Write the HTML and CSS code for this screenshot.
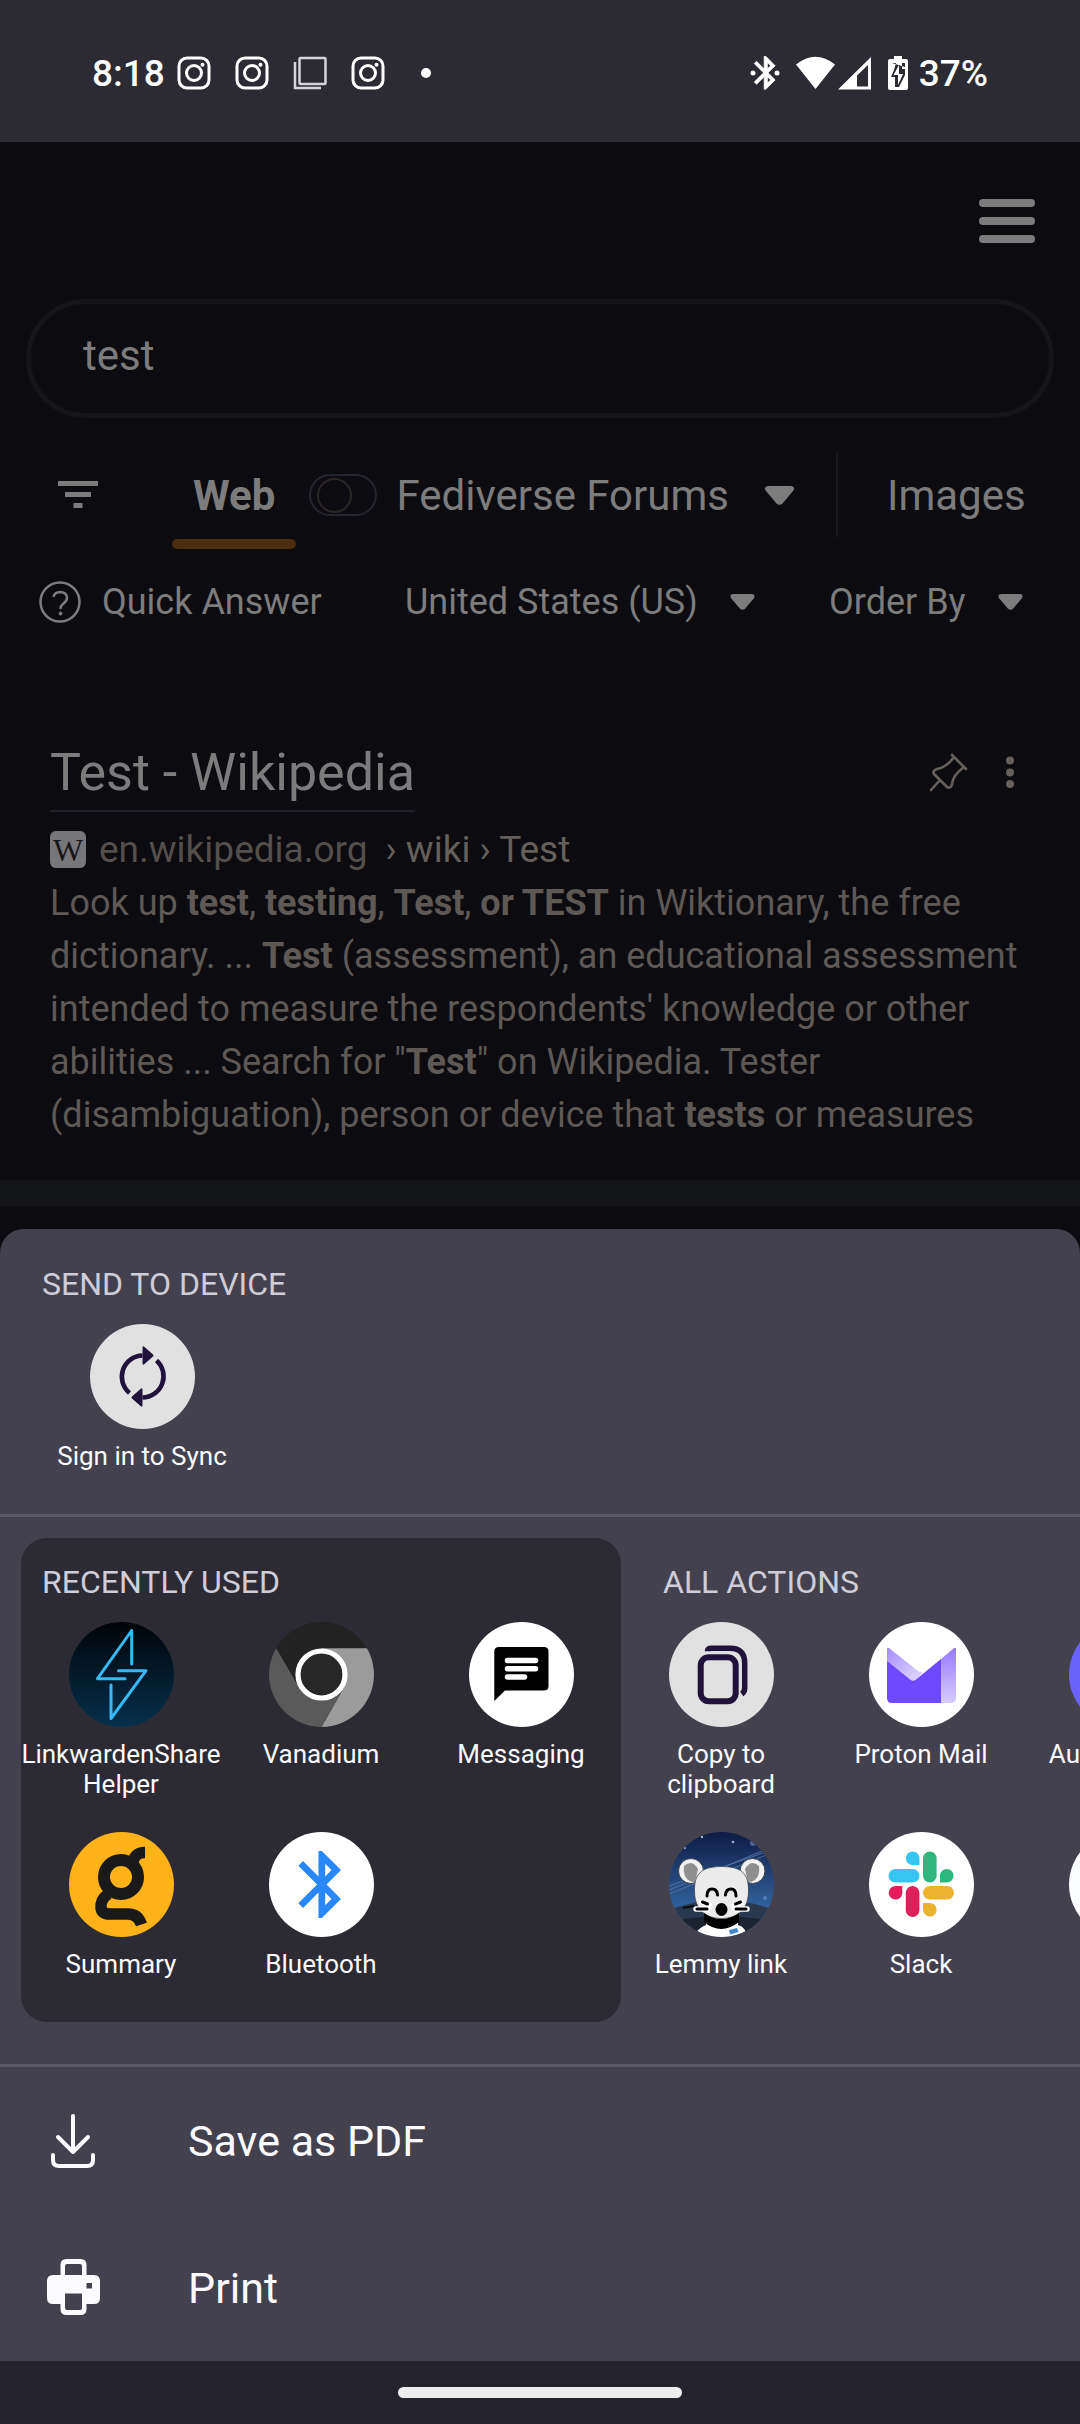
FILE: index.html
```html
<!DOCTYPE html>
<html lang="en">
<head>
<meta charset="utf-8">
<meta name="viewport" content="width=device-width, initial-scale=1">
<title>Share</title>
<link rel="stylesheet" href="styles.css">
</head>
<body>
<svg class="defs" aria-hidden="true">
  <defs>
    <symbol id="insta" viewBox="0 0 34 34">
      <rect x="2" y="2" width="30" height="30" rx="8" fill="none" stroke="currentColor" stroke-width="3"/>
      <circle cx="17" cy="17" r="7.500" fill="none" stroke="currentColor" stroke-width="3"/>
      <circle cx="25.500" cy="8.800" r="2" fill="currentColor"/>
    </symbol>
    <symbol id="caret" viewBox="0 0 29 19">
      <path d="M3 0h23q5 1 2 5L17.500 17.500q-3 2.500-6 0L1 5Q-2 1 3 0z" fill="currentColor"/>
    </symbol>
    <path id="bt" d="M17.710 7.710L12 2h-1v7.590L6.410 5 5 6.410 10.590 12 5 17.590 6.410 19 11 14.410V22h1l5.710-5.710-4.300-4.290 4.300-4.290zM13 5.830l1.880 1.880L13 9.590V5.830zm1.880 10.460L13 18.170v-3.760l1.880 1.880z"/>
    <linearGradient id="night" x1="0" y1="0" x2="0" y2="1"><stop offset="0" stop-color="#010408"/><stop offset="1" stop-color="#05304c"/></linearGradient>
    <linearGradient id="sky" x1="0" y1="0" x2="0" y2="1"><stop offset="0" stop-color="#0f1b45"/><stop offset=".7" stop-color="#30609a"/></linearGradient>
    <linearGradient id="flap" x1="0" y1="0" x2="1" y2="1"><stop offset="0" stop-color="#a48bff"/><stop offset="1" stop-color="#e6defe"/></linearGradient>
    <linearGradient id="side" x1="0" y1="0" x2="0" y2="1"><stop offset="0" stop-color="#957afb"/><stop offset="1" stop-color="#d8ccfe"/></linearGradient>
    <clipPath id="disc"><circle cx="52.500" cy="52.500" r="52.500"/></clipPath>
  </defs>
</svg>

<header class="status">
  <span class="clock">8:18</span>
  <svg class="note" width="34" height="34"><use href="#insta"/></svg>
  <svg class="note" width="34" height="34"><use href="#insta"/></svg>
  <svg class="note" width="34" height="34" viewBox="0 0 34 34" fill="none" stroke="#d5d4d8" stroke-width="2.500"><rect x="6.500" y="2" width="26" height="26" rx="1"/><path d="M2 6v26h26"/></svg>
  <svg class="note" width="34" height="34"><use href="#insta"/></svg>
  <i class="dot"></i>
  <span class="system">
    <svg width="30" height="34" viewBox="0 0 30 34" fill="currentColor"><use href="#bt" transform="translate(-4 -3) scale(1.650)" stroke="currentColor" stroke-width=".4"/><circle cx="3" cy="17" r="2.500"/><circle cx="27" cy="17" r="2.500"/></svg>
    <svg width="76" height="34" viewBox="0 0 76 34" fill="currentColor"><path d="M0 8.500Q19.500-7 39 8.500L19.500 33z"/><path d="M75 1v32.500H42zM72 9L61 19.500V30.500H72z" fill-rule="evenodd"/></svg>
    <svg width="20" height="36" viewBox="0 0 20 36"><path d="M6 1h8v3h4q2 0 2 2v27q0 2-2 2H2q-2 0-2-2V6q0-2 2-2h4z" fill="currentColor"/><path d="M4 8H8L6 15 3 22h4v10h4l6-12V14h-3V8h3v4" fill="#2c2a33"/><path d="M11 10L5.500 20H10v10l5-11h-4z" fill="currentColor"/></svg>
    <span class="battery">37%</span>
  </span>
</header>

<main>
  <div class="topbar">
    <button class="menu" aria-label="Menu"><i></i><i></i><i></i></button>
  </div>
  <form class="search"><input type="text" value="test" aria-label="Search"></form>

  <nav class="tabs">
    <button class="filter" aria-label="Filters"><svg width="40" height="28" viewBox="0 0 40 28" fill="currentColor"><path d="M0 0h40v5H0zM7 11h26v5H7zM15.500 22h9v5h-9z"/></svg></button>
    <a class="web" href="#">Web</a>
    <input class="toggle" id="lens" type="checkbox">
    <label class="lens" for="lens">Fediverse Forums</label>
    <button class="pick" aria-label="Choose lens"><svg width="29" height="19"><use href="#caret"/></svg></button>
    <i class="rule"></i>
    <a class="images" href="#">Images</a>
  </nav>

  <div class="filters">
    <button class="quick">
      <svg width="42" height="42" viewBox="0 0 42 42" fill="none" stroke="currentColor" stroke-width="2.500"><circle cx="21" cy="21" r="19.500"/><path d="M14.500 16q1-5 7-5 6.500.5 6.500 6 0 3-4 6-2.500 2-2.500 5"/><circle cx="21.500" cy="32.500" r="1.500" fill="currentColor" stroke-width="1"/></svg>
      Quick Answer
    </button>
    <span class="choice region"><select aria-label="Region"><option>United States (US)</option></select><svg width="25" height="16" viewBox="0 0 29 19"><use href="#caret"/></svg></span>
    <span class="choice"><select aria-label="Order"><option>Order By</option></select><svg width="25" height="16" viewBox="0 0 29 19"><use href="#caret"/></svg></span>
  </div>

  <article class="result">
    <div class="result-head">
      <h2><a href="#">Test - Wikipedia</a></h2>
      <button aria-label="Pin"><svg width="39" height="39" viewBox="0 0 39 39" fill="none" stroke="currentColor" stroke-width="2.600" stroke-linecap="round" stroke-linejoin="round"><path d="M23 2L37 16M25 4q-7 10-17 12-5 2-3 5L18 34q4 2 5-3 1-9 12-17M11 27L2 37"/></svg></button>
      <button aria-label="More options"><svg width="8" height="33" viewBox="0 0 8 33" fill="currentColor"><circle cx="4" cy="4.500" r="4"/><circle cx="4" cy="16.500" r="4"/><circle cx="4" cy="28" r="4"/></svg></button>
    </div>
    <p class="url"><span class="favicon">W</span><span class="domain">en.wikipedia.org</span><span>› wiki › Test</span></p>
    <p class="snippet">Look up <b>test</b>, <b>testing</b>, <b>Test</b>, <b>or TEST</b> in Wiktionary, the free dictionary. ... <b>Test</b> (assessment), an educational assessment intended to measure the respondents' knowledge or other abilities ... Search for "<b>Test</b>" on Wikipedia. Tester (disambiguation), person or device that <b>tests</b> or measures</p>
  </article>
</main>

<section class="sheet">
  <div class="devices">
    <h3>SEND TO DEVICE</h3>
    <div class="apps">
      <button class="app">
        <svg viewBox="0 0 105 105"><circle cx="52.500" cy="52.500" r="52.500" fill="#e1e1e1"/><g fill="none" stroke="#20123a" stroke-width="4.600"><path d="M39.500 69A21.200 21.200 0 0 1 52.500 31.500"/><path d="M66.500 36.500A21.200 21.200 0 0 1 52.500 73.500"/></g><path d="M52.500 24q0-3 2-1l8.500 7.500q1 1 0 2L54.500 40q-2 2-2-1zM52.500 81q0 3-2 1L42 74.500q-1-1 0-2L50.500 65q2-2 2 1z" fill="#20123a"/></svg>
        <span>Sign in to Sync</span>
      </button>
    </div>
  </div>

  <div class="shelves">
    <div class="shelf recent">
      <h3>RECENTLY USED</h3>
      <div class="apps">
        <button class="app">
          <svg viewBox="0 0 105 105"><circle cx="52.500" cy="52.500" r="52.500" fill="url(#night)"/><path d="M62.700 42V8.500L28.500 56.700H56M49.500 48.700H77L42 96.500V63" fill="none" stroke="#36b9f6" stroke-width="3" stroke-linecap="round" stroke-linejoin="round"/></svg>
          <span>LinkwardenShare Helper</span>
        </button>
        <button class="app">
          <svg viewBox="0 0 105 105"><g clip-path="url(#disc)"><path d="M0 0h105v105H0z" fill="#222"/><path d="M98 26.200H52.500V52.500L75 65.500 52.500 105H105V26.200z" fill="#9b9b9b"/><path d="M7.200 26.200L30 65.500 52.500 52.500 75 65.500 52.500 105H0V26.200z" fill="#5a5a5a"/></g><circle cx="52.500" cy="52.500" r="23.500" fill="#282828" stroke="#fff" stroke-width="5.200"/></svg>
          <span>Vanadium</span>
        </button>
        <button class="app">
          <svg viewBox="0 0 105 105"><circle cx="52.500" cy="52.500" r="52.500" fill="#fff"/><path d="M30 25h45q4.500 0 4.500 4.500v34.500q0 4.500-4.500 4.500H36L25.300 79V29.500Q25.300 25 30 25z"/><path d="M38.500 38.500H66.500M38.500 46.800H66.500M38.500 55H55.500" stroke="#fff" stroke-width="5.500" stroke-linecap="round"/></svg>
          <span>Messaging</span>
        </button>
        <button class="app">
          <svg viewBox="0 0 105 105"><circle cx="52.500" cy="52.500" r="52.500" fill="#ffb319"/><g fill="none" stroke="#191919"><circle cx="52" cy="45" r="17" stroke-width="12"/><path d="M64 33Q64 20.500 76 20.500M39 62Q31 68 32 76 33 82 41 82H59Q69 82 72.500 92.500" stroke-width="11.500"/></g></svg>
          <span>Summary</span>
        </button>
        <button class="app">
          <svg viewBox="0 0 105 105"><circle cx="52.500" cy="52.500" r="52.500" fill="#fff"/><use href="#bt" fill="#2787fb" transform="translate(12.500 12.200) scale(3.360)"/></svg>
          <span>Bluetooth</span>
        </button>
      </div>
    </div>

    <div class="shelf all">
      <h3>ALL ACTIONS</h3>
      <div class="apps">
        <button class="app">
          <svg viewBox="0 0 105 105"><circle cx="52.500" cy="52.500" r="52.500" fill="#e1e1e1"/><g fill="none" stroke="#20123a" stroke-width="6"><rect x="31.700" y="35.200" width="35" height="44" rx="8"/><path d="M38.500 29.200q0-3 4-3H61Q75.700 26.200 75.700 41V66q0 4-3 6" stroke-width="5.500"/></g></svg>
          <span>Copy to clipboard</span>
        </button>
        <button class="app">
          <svg viewBox="0 0 105 105"><circle cx="52.500" cy="52.500" r="52.500" fill="#fff"/><path d="M18 27q0-2 2-1L49 49q3 2 6 0L46 59H40L18 41z" fill="url(#flap)"/><path d="M71 38L85 26q2-1 2 1V76q0 5-5 5H71z" fill="url(#side)"/><path d="M18 39L41 57.500q3 2.500 6 0L72 37V81H23q-5 0-5-5z" fill="#6d4aff"/></svg>
          <span>Proton Mail</span>
        </button>
        <button class="app">
          <svg viewBox="0 0 105 105"><circle cx="52.500" cy="52.500" r="52.500" fill="#6c63ff"/></svg>
          <span>Aurora Store</span>
        </button>
        <button class="app">
          <svg viewBox="0 0 105 105"><g clip-path="url(#disc)"><path d="M0 0h105v105H0z" fill="url(#sky)"/><path d="M0 58L105 14M0 62L105 20M0 54L105 17" stroke="#5a7bab" stroke-width=".8"/><g fill="#9fb3d6"><circle cx="33" cy="5" r="1.200"/><circle cx="64" cy="10" r="1.300"/><circle cx="16" cy="16" r="1"/><circle cx="84" cy="11" r="3" fill="#4c6495"/><circle cx="96" cy="66" r="2" fill="#557db4"/></g><path d="M0 78Q52 58 105 78V105H0z" fill="#29374f"/><path d="M0 90Q52 78 105 90V105H0z" fill="#1b2230"/><path d="M14 76l11-2" stroke="#070a10" stroke-width="2"/><path d="M26 105q2-9 11-12V82H69v11q8 2 9 12z" fill="#fff"/><g stroke="#3a414d" fill="#f1f1f1"><circle cx="22" cy="39" r="12.500"/><circle cx="83.500" cy="39" r="12.500"/></g><path d="M15 34q8-7 14 3l-3 13q-7 0-10-6-2-5-1-10zM90 34q-8-7-14 3l3 13q7 0 10-6 2-5 1-10z" fill="#8f8f8f"/><path d="M52.500 34.500C74 34.500 80 43 79.500 60 79 78 68 86.500 52.500 86.500S26 78 25.500 60C25 43 31 34.500 52.500 34.500z" fill="#ebebeb" stroke="#3a414d" stroke-width=".8"/><path d="M35 81Q52 93 70 81V90Q52 104 35 90z"/><path d="M27 77H39M66 77H78M33 70l7 3M72 70l-7 3" stroke="#fff" stroke-width="5.500" stroke-linecap="round"/><g fill="none" stroke="#000" stroke-width="3" stroke-linecap="round"><path d="M28 77H38M67 77H77M33.500 70l5 2M71.500 70l-5 2"/><path d="M38 64q0-7 5-7t5.500 6M56.500 63q.5-6 5.500-6t5 7"/></g><ellipse cx="52.500" cy="77.500" rx="6" ry="6.500"/><path d="M60 98l8-2 1.500 4-8.500 2.500z" fill="#3f86c6"/></g></svg>
          <span>Lemmy link</span>
        </button>
        <button class="app">
          <svg viewBox="0 0 105 105"><circle cx="52.500" cy="52.500" r="52.500" fill="#fff"/><g fill="#36c5f0"><rect x="19.500" y="37" width="31" height="13.600" rx="6.800"/><path d="M50.500 33h-7a6.800 6.800 0 1 1 7-6.800z"/></g><g fill="#2eb67d"><rect x="54" y="19.500" width="13.600" height="31" rx="6.800"/><path d="M71 50.500v-7a6.800 6.800 0 1 1 6.800 7z"/></g><g fill="#e01e5a"><rect x="36.800" y="54" width="13.600" height="31" rx="6.800"/><path d="M33.300 54v7a6.800 6.800 0 1 1-6.800-7z"/></g><g fill="#ecb22e"><rect x="54" y="54" width="31" height="13.600" rx="6.800"/><path d="M54 71h7a6.800 6.800 0 1 1-7 6.800z"/></g></svg>
          <span>Slack</span>
        </button>
        <button class="app" aria-label="More">
          <svg viewBox="0 0 105 105"><circle cx="52.500" cy="52.500" r="52.500" fill="#fbfdff"/></svg>
        </button>
      </div>
    </div>
  </div>

  <button class="action">
    <svg width="54" height="58" viewBox="0 0 54 58" fill="none" stroke="#fbfbfe" stroke-width="4" stroke-linecap="round" stroke-linejoin="round"><path d="M27 4V40M12 25L27 40 42 25M7 43v5q0 6 6 6h28q6 0 6-6v-5"/></svg>
    Save as PDF
  </button>
  <button class="action">
    <svg width="54" height="58" viewBox="0 0 54 58"><path d="M20.500 0h14q6 0 6 6v10H48q6 0 6 6v17q0 6-6 6h-7.500v5q0 6-6 6h-14q-6 0-6-6v-5H7q-6 0-6-6V22q0-6 6-6h7.500V6q0-6 6-6zM19 16H36V7q0-2-2-2H21q-2 0-2 2zM19 34.500V49q0 2 2 2H34q2 0 2-2V34.500zM40.500 24v5.500H46V24z" fill="#fbfbfe" fill-rule="evenodd"/></svg>
    Print
  </button>
</section>

<footer class="gesture"><i></i></footer>
</body>
</html>
```
FILE: styles.css
```css
* { box-sizing: border-box; }

body {
  margin: 0;
  min-height: 100vh;
  display: flex;
  flex-direction: column;
  overflow-x: hidden;
  background: #0c0b10;
  color: #fbfbfe;
  font-family: Roboto, "Noto Sans", sans-serif;
}

.defs { position: absolute; width: 0; height: 0; }

svg { display: block; flex: none; }
h2, h3, p { margin: 0; font-weight: 400; }
a { color: inherit; text-decoration: none; }

button, input, select {
  margin: 0;
  padding: 0;
  border: 0;
  background: none;
  color: inherit;
  font: inherit;
  appearance: none;
}

/* Status bar */
.status {
  display: flex;
  align-items: center;
  height: 142px;
  padding: 4px 92px 0;
  background: #2c2a33;
  color: #fff;
  font-size: 37px;
  font-weight: 500;
}
.clock { width: 85px; }
.note { margin-right: 24px; }
.dot { width: 10px; height: 10px; margin-left: 12px; border-radius: 50%; background: #fff; }
.system { display: flex; align-items: center; gap: 16px; margin-left: auto; }
.battery { margin-left: -5px; }

/* Dimmed page behind the sheet */
main { color: #7c7c7c; }
.topbar {
  display: flex;
  align-items: center;
  justify-content: flex-end;
  height: 157px;
  padding-right: 45px;
}
.menu { display: grid; gap: 10px; width: 56px; }
.menu i { height: 8px; border-radius: 4px; background: #7c7c7c; }

.search {
  display: flex;
  height: 119px;
  margin: 0 26px 27px;
  padding: 0 52px 6px;
  border: 5px solid #141519;
  border-radius: 60px;
}
.search input { flex: 1; min-width: 0; font-size: 42px; outline: 0; }

.tabs {
  display: flex;
  align-items: center;
  height: 104px;
  padding: 0 0 4px 58px;
  white-space: nowrap;
  font-size: 42px;
}
.filter { margin-right: 74px; }
.web {
  position: relative;
  align-self: stretch;
  display: flex;
  align-items: center;
  margin-bottom: -4px;
  padding: 0 21px 4px;
  font-weight: 700;
}
.web::after {
  content: "";
  position: absolute;
  right: 0;
  bottom: 0;
  left: 0;
  height: 10px;
  border-radius: 5px;
  background: #4c2c10;
}
.toggle {
  flex: none;
  display: flex;
  align-items: center;
  width: 68px;
  height: 42px;
  margin: 0 19px 0 13px;
  padding-left: 6px;
  border: 2px solid #23262e;
  border-radius: 21px;
}
.toggle::before {
  content: "";
  width: 31px;
  height: 31px;
  border: 2px solid #2c2725;
  border-radius: 50%;
}
.pick { margin: 0 42px 0 36px; }
.rule { width: 2px; height: 84px; background: #18191f; }
.images { margin-left: 49px; }

.filters {
  display: flex;
  align-items: center;
  height: 42px;
  margin-top: 32px;
  padding-left: 39px;
  white-space: nowrap;
  font-size: 36px;
}
.quick { display: flex; align-items: center; gap: 21px; width: 366px; }
.choice { display: flex; align-items: center; gap: 32px; }
.region { margin-right: 74px; }

.result {
  margin-top: 122px;
  padding: 0 50px 38px;
  border-bottom: 26px solid #121418;
}
.result-head { display: flex; align-items: center; gap: 38px; padding-right: 16px; color: #66605a; }
.result-head h2 { margin-right: auto; }
.result-head h2 a {
  display: block;
  padding-bottom: 10px;
  border-bottom: 2px solid #1c2127;
  color: #7c7c7c;
  font-size: 52px;
  line-height: 55px;
}
.result-head button { padding-bottom: 12px; }
.url {
  display: flex;
  align-items: center;
  gap: 18px;
  height: 37px;
  margin-top: 19px;
  color: #66605a;
  font-size: 37px;
}
.favicon {
  width: 36px;
  height: 37px;
  margin-right: -5px;
  border-radius: 6px;
  background: #77767b;
  color: #17171a;
  font: 32px/38px "Liberation Serif", serif;
  text-align: center;
}
.domain { color: #544f4b; }
.snippet {
  margin: 9px -10px 0 0;
  color: #5e5955;
  font-size: 36px;
  line-height: 53px;
}

/* Share sheet */
.sheet {
  margin-top: 23px;
  border-radius: 24px 24px 0 0;
  background: #44414e;
  overflow: hidden;
}
.sheet h3 {
  margin-bottom: 20px;
  color: #cfcdd7;
  font-size: 32px;
  line-height: 40px;
}
.devices { padding: 35px 42px 13px; }
.apps { display: grid; grid-template-columns: repeat(3, 200px); gap: 33px 0; }
.app {
  display: flex;
  flex-direction: column;
  align-items: center;
  gap: 12px;
  height: 177px;
  font-size: 26px;
  line-height: 30px;
}
.app svg { width: 105px; height: 105px; }
.app span { max-width: 200px; }

.shelves {
  display: flex;
  padding: 21px 0 42px 21px;
  border: solid #5b5966;
  border-width: 3px 0;
  overflow: hidden;
}
.shelf { flex: none; padding: 24px 0 13px; }
.shelf h3 { padding-left: 21px; }
.recent { border-radius: 26px; background: #2c2a33; }
.all h3 { padding-left: 42px; }

.action {
  display: flex;
  align-items: center;
  gap: 88px;
  width: 100%;
  height: 147px;
  padding-left: 46px;
  font-size: 43px;
}

.gesture {
  flex: 1;
  display: flex;
  align-items: center;
  justify-content: center;
  min-height: 63px;
  background: #24232d;
}
.gesture i { width: 284px; height: 11px; border-radius: 6px; background: #ededed; }
```
